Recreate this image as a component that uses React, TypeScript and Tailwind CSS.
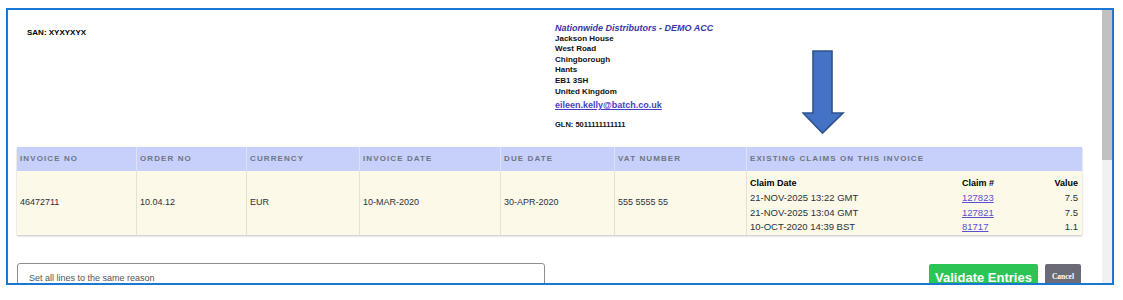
const columns = [
	{ name: 'INVOICE NO', value: '46472711' },
	{ name: 'ORDER NO', value: '10.04.12' },
	{ name: 'CURRENCY', value: 'EUR' },
	{ name: 'INVOICE DATE', value: '10-MAR-2020' },
	{ name: 'DUE DATE', value: '30-APR-2020' },
	{ name: 'VAT NUMBER', value: '555 5555 55' },
];

const claims = [
	{ date: '21-NOV-2025 13:22 GMT', id: '127823', value: '7.5' },
	{ date: '21-NOV-2025 13:04 GMT', id: '127821', value: '7.5' },
	{ date: '10-OCT-2020 14:39 BST', id: '81717', value: '1.1' },
];

const address = ['Jackson House', 'West Road', 'Chingborough', 'Hants', 'EB1 3SH', 'United Kingdom'];

const DownArrow = () => (
	<svg width="44" height="86" viewBox="0 0 44 86" className="absolute left-[794px] top-[40px]">
		<path
			d="M11 1 H30 V63 H41 L20.5 83 L1 63 H11 Z"
			fill="#4472c4"
			stroke="#2f528f"
			strokeWidth="1.6"
			strokeLinejoin="miter"
		/>
	</svg>
);

const App = () => {
	return (
		<div className="w-[1123px] h-[300px] bg-white pt-[8px] pl-[6px] font-['Liberation_Sans',Arial,sans-serif]">
			<div className="w-[1108px] h-[277px] border-2 border-[#1a78d4] overflow-hidden flex">
				{/* page content */}
				<div className="relative flex-1 flex flex-col">
					<div className="flex items-start pt-[13px]">
						<div className="w-[547px] pl-[19px] pt-[5px] text-[8px] leading-[10px] font-bold text-black">
							SAN: XYXYXYX
						</div>
						<div className="flex flex-col text-[8px] leading-[10.6px] font-bold text-[#111]">
							<p className="text-[9px] italic text-[#3b35a8]">Nationwide Distributors - DEMO ACC</p>
							{address.map((line) => (
								<p key={line}>{line}</p>
							))}
							<a className="mt-[2px] text-[9px] leading-[12px] text-[#4a3fc4] underline">
								eileen.kelly@batch.co.uk
							</a>
							<p className="mt-[9px] text-[7.5px] leading-[10px]">GLN: 5011111111111</p>
						</div>
					</div>
					<DownArrow />

					{/* invoice table */}
					<div className="ml-[9px] mt-[17px] w-[1065px] shadow-[0_1px_2px_rgba(0,0,0,0.25)]">
						<div className="grid grid-cols-[120px_110px_113px_141px_114px_132px_1fr] h-[24px] bg-[#c6d0fa]">
							{columns.map((col) => (
								<div
									key={col.name}
									className="flex items-center pl-[3px] border-r border-[#dbe1fb] text-[8px] font-bold tracking-[1.1px] text-[#6f7585]">
									{col.name}
								</div>
							))}
							<div className="flex items-center pl-[3px] text-[8px] font-bold tracking-[1.1px] text-[#6f7585]">
								EXISTING CLAIMS ON THIS INVOICE
							</div>
						</div>
						<div className="grid grid-cols-[120px_110px_113px_141px_114px_132px_1fr] h-[64px] bg-[#fdf9e9]">
							{columns.map((col) => (
								<div
									key={col.name}
									className="flex items-center pl-[3px] border-r border-[#e6e2d2] text-[9px] text-[#2d3138]">
									{col.value}
								</div>
							))}
							<div className="grid grid-cols-[212px_1fr_auto] pt-[5px] pl-[3px] pr-[4px] text-[9.5px] leading-[14px] text-[#2d3138]">
								<span className="font-bold text-[9px] text-black">Claim Date</span>
								<span className="font-bold text-[9px] text-black">Claim #</span>
								<span className="font-bold text-[9px] text-black text-right">Value</span>
								{claims.map((c) => (
									<div key={c.id} className="contents">
										<span>{c.date}</span>
										<a className="text-[#5a4fcf] underline">{c.id}</a>
										<span className="text-right">{c.value}</span>
									</div>
								))}
							</div>
						</div>
					</div>

					{/* reason + actions */}
					<div className="flex items-start justify-between ml-[9px] mr-[21px] mt-[28px]">
						<div className="w-[528px] h-[30px] border border-[#8f8f8f] rounded-t-[3px] pl-[11px] pt-[8px] text-[9px] leading-[12px] text-[#555]">
							Set all lines to the same reason
						</div>
						<div className="flex gap-[7px] mt-[1px]">
							<button className="w-[109px] h-[26px] rounded-[2px] bg-[#2cc455] pt-[2px] text-[13px] leading-[16px] font-bold text-white self-start">
								Validate Entries
							</button>
							<button className="w-[36px] h-[26px] rounded-[2px] bg-[#6b6b78] text-[7.5px] font-bold text-white font-['Liberation_Serif',serif] self-start pb-[2px]">
								Cancel
							</button>
						</div>
					</div>
				</div>

				{/* scrollbar */}
				<div className="w-[10px] h-full bg-[#f1f1f1]">
					<div className="h-[150px] bg-[#c1c1c1]" />
				</div>
			</div>
		</div>
	);
};

export default App;
